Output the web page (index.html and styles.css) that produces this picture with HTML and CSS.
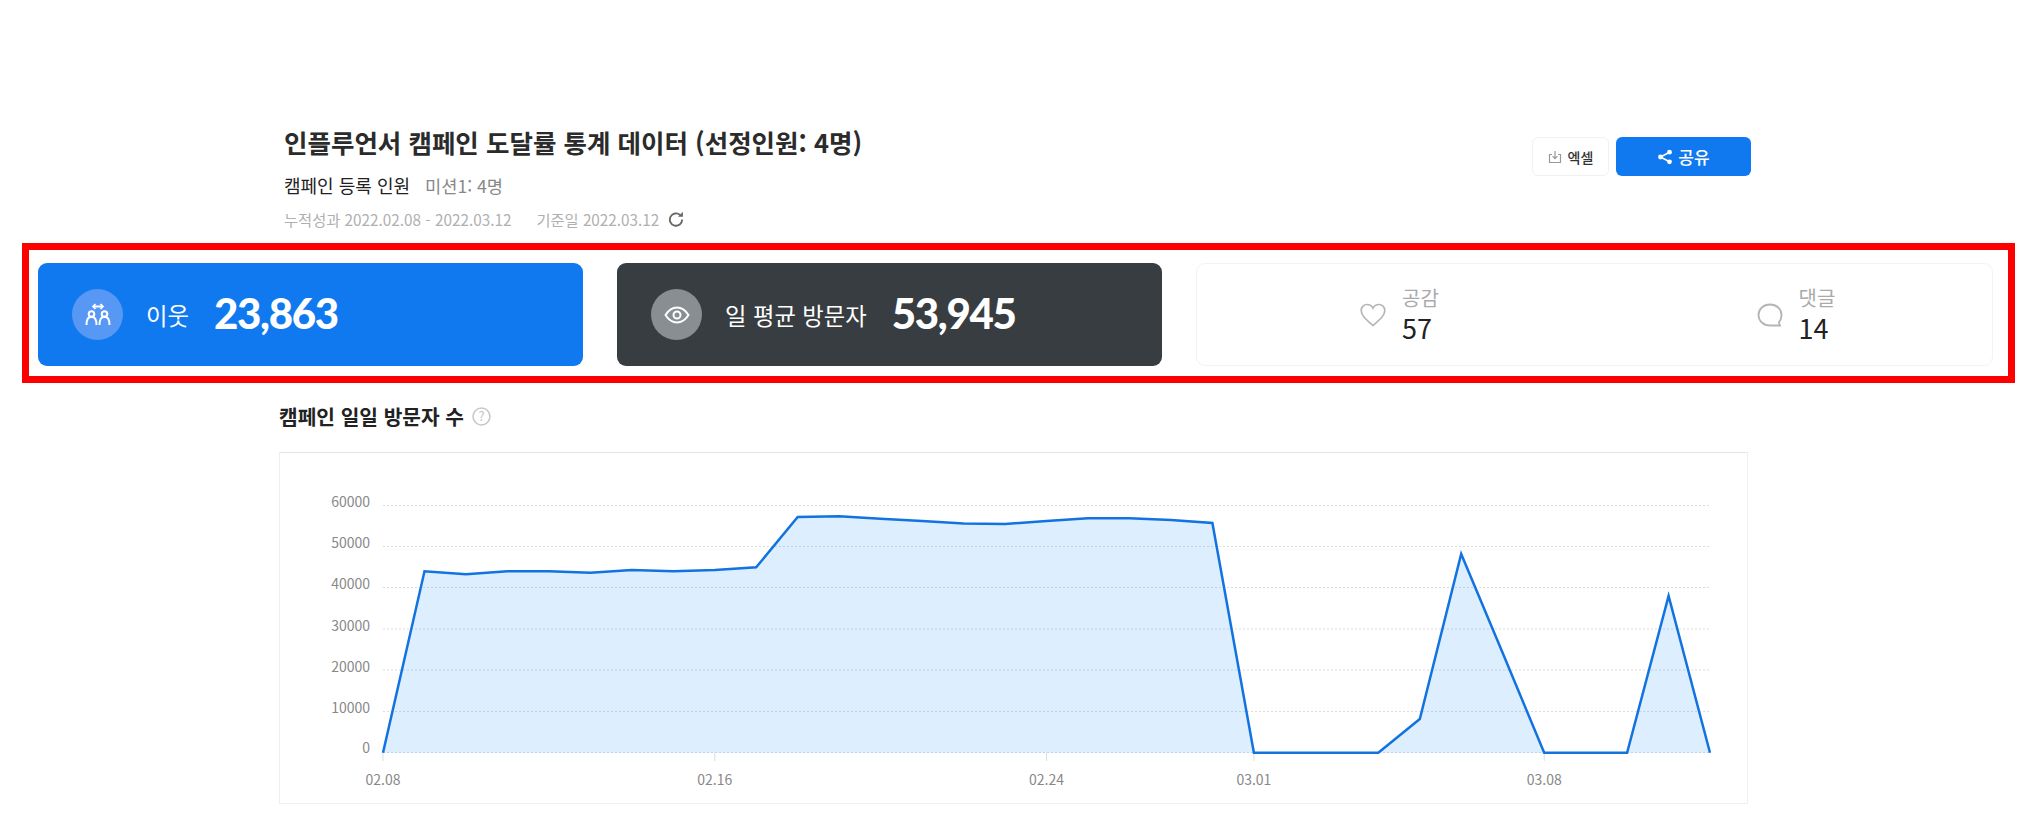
FILE: index.html
```html
<!DOCTYPE html>
<html lang="ko">
<head>
    <meta charset="UTF-8">
    <meta name="viewport" content="width=device-width, initial-scale=1.0">
    <title>인플루언서 캠페인 도달률 통계 데이터</title>
    <link rel="stylesheet" href="styles.css">
</head>
<body>
    <div class="report-head">
        <div>
            <h1>인플루언서 캠페인 도달률 통계 데이터 (선정인원: 4명)</h1>
            <div class="sub">
                <span class="sub-name">캠페인 등록 인원</span>
                <span class="sub-count">미션1: 4명</span>
            </div>
            <div class="dates">
                <span>누적성과 2022.02.08 - 2022.03.12</span>
                <span>기준일 2022.03.12</span>
                <svg class="refresh" viewBox="1.5 1 13 13" width="16" height="16"><path d="M13 8a5 5 0 1 1-1.6-3.7" fill="none" stroke="#666" stroke-width="1.5"/><path d="M13.6 1.6v4h-4z" fill="#666"/></svg>
            </div>
        </div>
        <div class="head-buttons">
            <button class="btn-excel">
                <svg viewBox="0 0 14 14" width="14" height="14"><path d="M4 4.5H1.5v8h11v-8H10" fill="none" stroke="#999" stroke-width="1.2"/><path d="M7 1v7.5M4.6 6.2 7 8.6l2.4-2.4" fill="none" stroke="#999" stroke-width="1.2"/></svg>
                엑셀
            </button>
            <button class="btn-share">
                <svg viewBox="0 0 16 16" width="16" height="16"><path d="M12.5 3.2 3.5 8l9 4.8" fill="none" stroke="#fff" stroke-width="1.6"/><circle cx="12.5" cy="3.2" r="2.4" fill="#fff"/><circle cx="3.5" cy="8" r="2.4" fill="#fff"/><circle cx="12.5" cy="12.8" r="2.4" fill="#fff"/></svg>
                공유
            </button>
        </div>
    </div>

    <div class="stats">
        <div class="stat stat-blue">
            <div class="stat-icon">
                <svg viewBox="0 0 28 28" width="28" height="28" fill="none" stroke="#fff" stroke-width="2"><path d="M10 5.500h8"/><path d="M11.500 3 9 5.500l2.500 2.500M16.500 3 19 5.500 16.500 8" stroke-width="1.700"/><circle cx="7.500" cy="13" r="2.800"/><circle cx="20.500" cy="13" r="2.800"/><path d="M2.500 24c0-5 2-8.200 5-8.200s5 3.200 5 8.200M15.500 24c0-5 2-8.200 5-8.200s5 3.200 5 8.200"/></svg>
            </div>
            <span class="stat-label">이웃</span>
            <span class="stat-num">23,863</span>
        </div>
        <div class="stat stat-dark">
            <div class="stat-icon icon-gray">
                <svg viewBox="0 0 28 28" width="28" height="28" fill="none" stroke="#fff" stroke-width="2"><path d="M2.500 14C6 8.500 10 6.500 14 6.500S22 8.500 25.500 14C22 19.500 18 21.500 14 21.500S6 19.500 2.500 14Z"/><circle cx="14" cy="14" r="3.500"/></svg>
            </div>
            <span class="stat-label">일 평균 방문자</span>
            <span class="stat-num">53,945</span>
        </div>
        <div class="stat-plain">
            <div class="react">
                <svg viewBox="0 0 26 24" width="26" height="24" fill="none" stroke="#b5b5b5" stroke-width="1.7"><path d="M13 22.500C6 16.500 1.200 12.500 1.200 7.500 1.200 3.800 4 1.500 7 1.500 9.500 1.500 11.800 2.800 13 5.200 14.200 2.800 16.500 1.500 19 1.500 22 1.500 24.800 3.800 24.800 7.500 24.800 12.500 20 16.500 13 22.500Z"/></svg>
                <div>
                    <div class="react-label">공감</div>
                    <div class="react-num">57</div>
                </div>
            </div>
            <div class="react">
                <svg viewBox="0 0 26 24" width="26" height="24" fill="none" stroke="#b5b5b5" stroke-width="1.8"><path d="M23 22.500H13C6.500 22.500 1.500 18 1.500 12S6.500 1.500 13 1.500 24.500 6 24.500 12C24.500 15 23.500 17.500 21.800 19.300Z"/></svg>
                <div>
                    <div class="react-label">댓글</div>
                    <div class="react-num">14</div>
                </div>
            </div>
        </div>
    </div>

    <div class="chart-section">
        <h2>캠페인 일일 방문자 수
            <svg viewBox="0 0 18 18" width="19" height="19"><circle cx="9" cy="9" r="8" fill="none" stroke="#c8c8c8" stroke-width="1.500"/><text x="9" y="13" text-anchor="middle" class="help-mark">?</text></svg>
        </h2>
        <div class="chart-box">
            <svg class="chart" viewBox="279 451 1469 352" width="1469" height="352">
                <g class="grid-lines">
                    <line x1="383" x2="1710" y1="504.500" y2="504.500"/>
                    <line x1="383" x2="1710" y1="545.500" y2="545.500"/>
                    <line x1="383" x2="1710" y1="586.500" y2="586.500"/>
                    <line x1="383" x2="1710" y1="628" y2="628"/>
                    <line x1="383" x2="1710" y1="669" y2="669"/>
                    <line x1="383" x2="1710" y1="710.500" y2="710.500"/>
                    <line x1="383" x2="1710" y1="751.500" y2="751.500"/>
                </g>
                <g class="ticks">
                    <line x1="383" x2="383" y1="752" y2="760"/>
                    <line x1="714.800" x2="714.800" y1="752" y2="760"/>
                    <line x1="1046.500" x2="1046.500" y1="752" y2="760"/>
                    <line x1="1253.900" x2="1253.900" y1="752" y2="760"/>
                    <line x1="1544.200" x2="1544.200" y1="752" y2="760"/>
                </g>
                <g class="y-labels">
                    <text x="370" y="506">60000</text>
                    <text x="370" y="547">50000</text>
                    <text x="370" y="588">40000</text>
                    <text x="370" y="629.500">30000</text>
                    <text x="370" y="670.500">20000</text>
                    <text x="370" y="711.500">10000</text>
                    <text x="370" y="752">0</text>
                </g>
                <g class="x-labels">
                    <text x="383" y="784">02.08</text>
                    <text x="714.800" y="784">02.16</text>
                    <text x="1046.500" y="784">02.24</text>
                    <text x="1253.900" y="784">03.01</text>
                    <text x="1544.200" y="784">03.08</text>
                </g>
                <path class="area" d="M383 751.700 424.500 570.300 466 573.300 507.400 570.300 548.900 570.300 590.400 571.700 631.800 569 673.300 570.300 714.800 569 756.200 566.300 797.700 516 839.200 515.300 880.600 517.700 922.100 520 963.600 522.500 1005 523 1046.500 520 1088 517.300 1129.500 517.300 1170.900 519 1212.400 522 1253.900 751.700 1378.300 751.700 1419.800 718 1461.200 553 1502.700 652 1544.200 751.700 1627.100 751.700 1668.600 595 1710 751.700Z"/>
                <polyline class="line" points="383,751.700 424.500,570.300 466,573.300 507.400,570.300 548.900,570.300 590.400,571.700 631.800,569 673.300,570.300 714.800,569 756.200,566.300 797.700,516 839.200,515.300 880.600,517.700 922.100,520 963.600,522.500 1005,523 1046.500,520 1088,517.300 1129.500,517.300 1170.900,519 1212.400,522 1253.900,751.700 1378.300,751.700 1419.800,718 1461.200,553 1502.700,652 1544.200,751.700 1627.100,751.700 1668.600,595 1710,751.700"/>
            </svg>
        </div>
    </div>
</body>
</html>
```
FILE: styles.css
```css
body {
    margin: 0;
    background-color: white;
    color: #222;
    font-family: "Noto Sans CJK KR", "Noto Sans", sans-serif;
}
.report-head {
    display: flex;
    justify-content: space-between;
    align-items: flex-start;
    width: 1467px;
    margin-left: 284px;
    padding-top: 123px;
}
h1 {
    margin: 0;
    font-size: 25.5px;
    line-height: 38px;
    font-weight: 700;
    color: #2b2b2b;
}
.sub {
    margin-top: 12px;
    font-size: 18px;
    line-height: 24px;
}
.sub-count {
    margin-left: 10px;
    font-size: 17.6px;
    color: #888;
}
.dates {
    display: flex;
    align-items: center;
    margin-top: 11px;
    font-size: 15.3px;
    line-height: 20px;
    color: #b0b0b0;
}
.dates span + span {
    margin-left: 25px;
}
.refresh {
    margin-left: 9px;
}
.head-buttons {
    display: flex;
    gap: 7px;
    margin-top: 14px;
}
button {
    display: flex;
    align-items: center;
    justify-content: center;
    height: 39px;
    padding: 0;
    font-family: inherit;
    border-radius: 6px;
    cursor: pointer;
}
.btn-excel {
    gap: 6px;
    width: 77px;
    background: white;
    border: 1px solid #f1f1f1;
    color: #333;
    font-size: 14px;
    font-weight: 500;
}
.btn-share {
    gap: 5px;
    width: 135px;
    background: #1179f0;
    border: none;
    color: white;
    font-size: 17px;
    font-weight: 500;
}
.stats {
    display: flex;
    gap: 34px;
    width: 1955px;
    margin-top: 14px;
    margin-left: 22px;
    padding: 13px 15px 10px 9px;
    border: 7px solid #f00;
}
.stat {
    display: flex;
    align-items: center;
    width: 545px;
    height: 103px;
    flex-shrink: 0;
    padding-left: 34px;
    box-sizing: border-box;
    border-radius: 9px;
    color: white;
}
.stat-blue {
    background: #1179f0;
}
.stat-dark {
    background: #383d41;
}
.stat-icon {
    display: flex;
    align-items: center;
    justify-content: center;
    width: 51px;
    height: 51px;
    border-radius: 50%;
    background: #5898f5;
}
.icon-gray {
    background: #888e92;
}
.stat-label {
    margin-left: 23px;
    font-size: 23.3px;
}
.stat-num {
    margin-left: 25px;
    margin-bottom: 4px;
    font-family: Lato, "Noto Sans", sans-serif;
    font-size: 42px;
    font-weight: 900;
    letter-spacing: -1.3px;
}
.stat-plain {
    display: flex;
    flex: 1;
    height: 103px;
    box-sizing: border-box;
    border: 1px solid #f3f3f3;
    border-radius: 9px;
}
.react {
    display: flex;
    align-items: center;
    gap: 16px;
    width: 50%;
    padding-left: 163px;
    box-sizing: border-box;
}
.react:last-child {
    padding-left: 162px;
}
.react-label {
    font-size: 20px;
    line-height: 26px;
    color: #aaa;
}
.react-num {
    font-size: 27px;
    line-height: 34px;
    color: #222;
}
.chart-section {
    margin-top: 19px;
    margin-left: 279px;
}
h2 {
    display: flex;
    align-items: center;
    gap: 8px;
    margin: 0;
    font-size: 20.3px;
    line-height: 28px;
    font-weight: 700;
    color: #222;
}
.help-mark {
    font-size: 12px;
    fill: #c4c4c4;
    font-weight: 400;
}
.chart-box {
    width: 1469px;
    height: 352px;
    margin-top: 22px;
    box-sizing: border-box;
    border: 1px solid #efefef;
    border-top-color: #e4e4e4;
}
.chart {
    display: block;
    margin: -1px;
}
.grid-lines line {
    stroke: #dcdcdc;
    stroke-width: 1;
    stroke-dasharray: 2 2;
}
.ticks line {
    stroke: #ddd;
    stroke-width: 1;
}
.y-labels text {
    font-size: 14px;
    fill: #888;
    text-anchor: end;
}
.x-labels text {
    font-size: 14px;
    fill: #888;
    text-anchor: middle;
}
.area {
    fill: #1a8cff;
    fill-opacity: 0.15;
}
.line {
    fill: none;
    stroke: #1273e0;
    stroke-width: 2.5;
}
```
